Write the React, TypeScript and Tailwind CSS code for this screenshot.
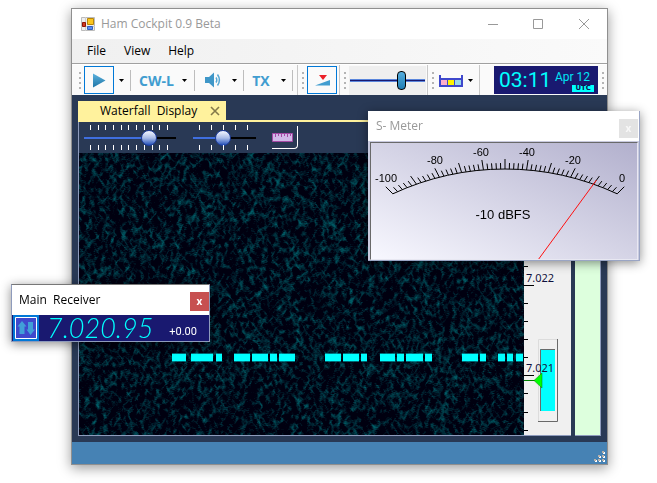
import React, { useEffect, useRef } from 'react';

const SIGNALS = [
  [93, 107], [112, 134], [137, 143], [155, 171], [173, 189], [191, 198], [200, 216],
  [246, 262], [264, 280], [282, 288], [301, 316], [318, 325], [327, 344], [346, 353],
  [383, 399], [401, 407], [419, 426], [428, 434], [437, 444],
];

function Waterfall() {
  const canvasRef = useRef<HTMLCanvasElement>(null);

  useEffect(() => {
    const canvas = canvasRef.current;
    if (!canvas) return;
    const w = (canvas.width = canvas.clientWidth);
    const h = (canvas.height = canvas.clientHeight);
    const ctx = canvas.getContext('2d');
    if (!ctx) return;

    let seed = 7021;
    const rand = () => {
      seed = (seed * 1664525 + 1013904223) % 4294967296;
      return seed / 4294967296;
    };

    const pad = 4;
    const nw = w + pad * 2;
    const raw = new Float32Array(nw * (h + pad * 2));
    for (let i = 0; i < raw.length; i++) raw[i] = rand() - 0.5;

    // two short smears, one leaning each way; the stronger one wins
    const smear = (x: number, y: number, lean: number) => {
      let sum = 0;
      for (let dy = -2; dy <= 2; dy++) {
        const row = (y + pad + dy) * nw + x + pad + Math.round((dy * lean) / 2);
        const weight = 1 - Math.abs(dy) * 0.22;
        sum += (raw[row] + raw[row - 1] * 0.6 + raw[row + 1] * 0.6) * weight;
      }
      return sum;
    };

    const img = ctx.createImageData(w, h);
    for (let y = 0; y < h; y++) {
      for (let x = 0; x < w; x++) {
        const v = Math.min(1, Math.max(0, Math.max(smear(x, y, 1), smear(x, y, -1)) * 0.45 + 0.04));
        const i = (y * w + x) * 4;
        img.data[i] = 0;
        img.data[i + 1] = v * 92;
        img.data[i + 2] = 16 + v * 86;
        img.data[i + 3] = 255;
      }
    }
    ctx.putImageData(img, 0, 0);

    SIGNALS.forEach(([from, to]) => {
      ctx.fillStyle = 'rgba(0,200,210,0.5)';
      ctx.fillRect(from, 200, to - from, 9);
      ctx.fillStyle = '#00ffff';
      ctx.fillRect(from, 201, to - from, 7);
    });
  }, []);

  return <canvas ref={canvasRef} className="block h-full w-full" />;
}

function Grip() {
  return (
    <div className="flex w-[9px] shrink-0 flex-col items-center gap-[3px]">
      {[0, 1, 2, 3].map((i) => (
        <span key={i} className="h-0.5 w-0.5 bg-[#b4b4b4]" />
      ))}
    </div>
  );
}

function Caret({ label, className = '' }: { label: string; className?: string }) {
  return (
    <button aria-label={label} className={`flex h-7 w-4 shrink-0 items-center justify-center ${className}`}>
      <svg width="5" height="3" viewBox="0 0 5 3">
        <path d="M0 0h5L2.500 3z" fill="#000" />
      </svg>
    </button>
  );
}

function Separator() {
  return <span className="h-[21px] w-px shrink-0 bg-[#bdbdbd]" />;
}

function Toolbar() {
  return (
    <div className="flex h-[31px] shrink-0 items-center border-t border-white bg-[#fafafa]">
      <div className="flex h-full shrink-0 items-center border-r border-[#c8c8c8] pl-[3px]">
        <Grip />
        <button aria-label="Start" className="flex h-7 w-[30px] items-center justify-center border border-[#0078d7]">
          <svg width="14" height="15" viewBox="0 0 14 15">
            <defs>
              <linearGradient id="play" x1="0" y1="0" x2="0" y2="1">
                <stop offset="0" stopColor="#5cb2de" />
                <stop offset="1" stopColor="#1d74a6" />
              </linearGradient>
            </defs>
            <path d="M1 0.500L13.500 7.500L1 14.500z" fill="url(#play)" />
          </svg>
        </button>
        <Caret label="Start options" className="pr-0.5" />
        <Separator />
        <button className="h-7 w-[47px] pl-1 font-['Open_Sans'] text-[14px] font-bold text-[#419dd0]">CW-L</button>
        <Caret label="Mode" className="pr-1" />
        <Separator />
        <button aria-label="Sound" className="flex h-7 w-8 items-center justify-center pl-1">
          <svg width="16" height="16" viewBox="0 0 16 16">
            <path d="M0 5h4l5-4.500v15L4 11H0z" fill="#3f97c8" />
            <path d="M11 5.500q1.600 2.500 0 5M12.500 2.500q3.800 5.500 0 11" fill="none" stroke="#56a8d4" strokeWidth="1.500" />
          </svg>
        </button>
        <Caret label="Sound options" className="pr-0.5" />
        <Separator />
        <button className="h-7 w-8 pl-0.5 font-['Open_Sans'] text-[14px] font-bold text-[#419dd0]">TX</button>
        <Caret label="Transmit options" className="pr-0.5" />
        <Separator />
        <span className="w-1" />
      </div>
      <div className="flex h-full shrink-0 items-center border-r border-[#c8c8c8]">
        <Grip />
        <button aria-label="Squelch" className="flex h-7 w-[30px] items-center justify-center border border-[#0078d7]">
          <svg width="15" height="11" viewBox="0 0 15 11">
            <path d="M4 0h8L8 5z" fill="#ec2028" />
            <path d="M0 10.500L15 5v5.500z" fill="#419dd0" />
          </svg>
        </button>
        <span className="w-0.5" />
      </div>
      <div className="flex h-full shrink-0 items-center border-r border-[#c8c8c8]">
        <Grip />
        <div className="mr-px flex h-[29px] w-[77px] items-center bg-[#efefef] px-px">
          <input
            type="range"
            aria-label="Volume"
            defaultValue={71}
            className="h-5 w-full appearance-none bg-transparent [&::-webkit-slider-runnable-track]:h-[3px] [&::-webkit-slider-runnable-track]:border-y [&::-webkit-slider-runnable-track]:border-[#5a86dc] [&::-webkit-slider-runnable-track]:bg-[#191970] [&::-webkit-slider-thumb]:-mt-[9px] [&::-webkit-slider-thumb]:h-[19px] [&::-webkit-slider-thumb]:w-[9px] [&::-webkit-slider-thumb]:appearance-none [&::-webkit-slider-thumb]:rounded-sm [&::-webkit-slider-thumb]:border [&::-webkit-slider-thumb]:border-black [&::-webkit-slider-thumb]:bg-[linear-gradient(#56aede,#1f7db3)]"
          />
        </div>
      </div>
      <div className="flex h-full shrink-0 items-center border-r border-[#c8c8c8]">
        <Grip />
        <button aria-label="Band" className="flex h-7 w-[26px] items-center justify-end pt-0.5">
          <svg width="24" height="13" viewBox="0 0 24 13">
            <path d="M0 0h2v3h20V0h2v12H0z" fill="#3f48cc" />
            <path d="M2 5h6v5H2z" fill="#ffaec9" />
            <path d="M9 5h6v5H9z" fill="#fff200" />
            <path d="M16 5h6v5h-6z" fill="#99d9ea" />
          </svg>
        </button>
        <Caret label="Band options" className="pr-0.5" />
      </div>
      <div className="ml-auto flex h-7 w-[104px] shrink-0 items-center justify-between bg-[#191970] pr-1 pl-[5px]">
        <time className="font-['Roboto'] text-[21px] leading-7 text-[#00ffff]">03:11</time>
        <div className="flex flex-col items-end">
          <span className="pr-1 font-['Roboto'] text-[12px] leading-4 text-[#00e5f5]">Apr 12</span>
          <span className="bg-[#00ffff] px-[3px] font-['DejaVu_Sans'] text-[7px] leading-[7px] font-bold text-[#101050]">UTC</span>
        </div>
      </div>
      <Grip />
    </div>
  );
}

const THUMB =
  'h-[15px] appearance-none bg-transparent [&::-webkit-slider-runnable-track]:h-0.5 [&::-webkit-slider-thumb]:-mt-[7px] [&::-webkit-slider-thumb]:size-4 [&::-webkit-slider-thumb]:appearance-none [&::-webkit-slider-thumb]:rounded-full [&::-webkit-slider-thumb]:border [&::-webkit-slider-thumb]:border-[#1d3c9c] [&::-webkit-slider-thumb]:bg-[linear-gradient(#f4f7ff,#a9bce8_50%,#2350b8)]';

function TickRow({ count }: { count: number }) {
  return (
    <div className="flex justify-between pr-2 pl-1.5">
      {Array.from({ length: count }, (_, i) => (
        <span key={i} className="h-[5px] w-px bg-white" />
      ))}
    </div>
  );
}

function ViewControls() {
  return (
    <div className="flex h-[31px] shrink-0 items-center pl-[5px]">
      <div className="flex w-[92px] flex-col">
        <TickRow count={11} />
        <input
          type="range"
          aria-label="Brightness"
          defaultValue={75}
          className={`w-full [&::-webkit-slider-runnable-track]:bg-[linear-gradient(to_right,#3f6fe0_70%,#000_70%)] ${THUMB}`}
        />
        <TickRow count={11} />
      </div>
      <div className="ml-[17px] flex w-[63px] flex-col">
        <TickRow count={5} />
        <input
          type="range"
          aria-label="Contrast"
          defaultValue={47}
          className={`w-full [&::-webkit-slider-runnable-track]:bg-[linear-gradient(to_right,#3f6fe0_48%,#000_48%)] ${THUMB}`}
        />
        <TickRow count={5} />
      </div>
      <button
        aria-label="Show scale"
        className="ml-4 flex h-[23px] w-[26px] items-center rounded-br border-r border-b border-white"
      >
        <svg width="21" height="9" viewBox="0 0 21 9">
          <path d="M0.500 0.500h20v8H0.500z" fill="#d0b8e8" stroke="#a349a4" />
          <path d="M3.500 1v3M6.500 1v2M9.500 1v3M12.500 1v2M15.500 1v3M18.500 1v2" stroke="#a349a4" />
        </svg>
      </button>
    </div>
  );
}

function FrequencyScale() {
  const ticks = [5, 23, 41, 59, 77, 95, 113, 150, 168, 186, 204, 240, 259, 277];
  return (
    <svg className="block h-full w-[47px] shrink-0 bg-[#f0f0f0]" viewBox="0 0 47 282" preserveAspectRatio="xMinYMin meet">
      {ticks.map((y) => (
        <path key={y} d={`M0 ${y + 0.5}h4`} stroke="#000" />
      ))}
      <path d="M0 132.500h10M0 222.500h10" stroke="#000" />
      <path d="M14.500 268V186.500H33" fill="none" stroke="#dcdcdc" />
      <path d="M14 268.500H33.500V186" fill="none" stroke="#696969" />
      <path d="M16 196h15v62H16z" fill="#00ffff" />
      <path d="M16.500 258V196.500H31" fill="none" stroke="#696969" />
      <path d="M0 227.500h11" stroke="#008000" />
      <path d="M10 227.500L18 220v15z" fill="#00ff00" stroke="#008000" strokeWidth="0.500" />
      <g fontFamily="'Noto Sans', sans-serif" fontSize="11" fill="#10103c">
        <text x="2" y="129">7.022</text>
        <text x="2" y="219">7.021</text>
      </g>
    </svg>
  );
}

function MainWindow() {
  return (
    <main className="flex min-h-0 flex-1 flex-col border border-[#8f8f8f] bg-white shadow-[0_3px_12px_rgba(0,0,0,0.4)]">
      <header className="flex h-[30px] shrink-0 items-center">
        <svg className="ml-[9px]" width="14" height="14" viewBox="0 0 14 14">
          <path d="M0.500 0.500h13v13H0.500z" fill="#eee" stroke="#bbb" />
          <path d="M4.500 0v14M0 9.500h14" stroke="#ccc" />
          <path d="M6.500 1.500h6v6h-6z" fill="#fbc51d" stroke="#b78509" />
          <path d="M1.500 5.500h3v4h-3z" fill="#d03a20" stroke="#8f1507" />
          <path d="M6.500 9.500h5v3h-5z" fill="#5a8cf0" stroke="#3460bc" />
        </svg>
        <h1 className="ml-1.5 text-[12px] text-[#999]">Ham Cockpit 0.9 Beta</h1>
        <div className="ml-auto flex">
          <button aria-label="Minimize" className="flex h-[29px] w-[45px] items-center justify-center">
            <svg width="10" height="10"><path d="M0 5.500h10" stroke="#999" /></svg>
          </button>
          <button aria-label="Maximize" className="flex h-[29px] w-[46px] items-center justify-center">
            <svg width="10" height="10"><path d="M0.500 0.500h9v9h-9z" fill="none" stroke="#999" /></svg>
          </button>
          <button aria-label="Close" className="flex h-[29px] w-[46px] items-center justify-center">
            <svg width="10" height="10"><path d="M0 0L10 10M10 0L0 10" stroke="#999" /></svg>
          </button>
        </div>
      </header>
      <nav className="flex h-[25px] shrink-0 items-center gap-1.5 border-b border-[#a0a0a0] bg-linear-to-r from-[#f0f0f0] to-[#fafafa] pl-[9px] text-[12px] text-black">
        <button className="px-1.5">File</button>
        <button className="px-1.5">View</button>
        <button className="px-1.5">Help</button>
      </nav>
      <Toolbar />
      <div className="flex min-h-0 flex-1 bg-[#293955] p-1.5">
        <section className="flex min-w-0 flex-1 flex-col">
          <div className="flex h-[19px] w-[148px] shrink-0 items-center justify-between bg-[#fff29d] pr-1.5 pl-[22px] text-[12px]">
            <span className="whitespace-pre text-black">Waterfall  Display</span>
            <button aria-label="Close tab">
              <svg className="block" width="10" height="10">
                <path d="M1 1L9 9M9 1L1 9" stroke="#84794a" strokeWidth="1.600" />
              </svg>
            </button>
          </div>
          <div className="h-0.5 shrink-0 bg-[#fff29d]" />
          <div className="flex min-h-0 flex-1 flex-col border-b border-l border-[#8e9bbc]">
            <ViewControls />
            <div className="flex min-h-0 flex-1">
              <div className="min-w-0 flex-1">
                <Waterfall />
              </div>
              <FrequencyScale />
            </div>
          </div>
        </section>
        <aside className="mt-5 ml-1 w-[26px] shrink-0 border-r border-b border-[#8e9bbc] bg-[#ddffdd]" />
      </div>
      <footer className="flex h-[22px] shrink-0 items-end justify-end bg-[#4682b4] p-px">
        <svg width="12" height="12" viewBox="0 0 12 12">
          {[[8, 0], [4, 4], [8, 4], [0, 8], [4, 8], [8, 8]].map(([x, y]) => (
            <g key={`${x}-${y}`}>
              <rect x={x + 1} y={y + 1} width="2" height="2" fill="#fff" />
              <rect x={x} y={y} width="2" height="2" fill="#b8b0a8" />
            </g>
          ))}
        </svg>
      </footer>
    </main>
  );
}

// pivot of the needle, and the dial circle that the rays from it meet
const PIVOT = { x: 134, y: 163 };
const DIAL_R = 266;
const DIAL_DROP = 129;

function dialPoint(db: number, offset = 0) {
  const a = ((db + 50) / 50) * (Math.PI / 4);
  const r = Math.sqrt(DIAL_R ** 2 - (DIAL_DROP * Math.sin(a)) ** 2) - DIAL_DROP * Math.cos(a) + offset;
  return { x: PIVOT.x + r * Math.sin(a), y: PIVOT.y - r * Math.cos(a) };
}

function SMeter() {
  const ticks = Array.from({ length: 51 }, (_, i) => -100 + i * 2);
  const start = dialPoint(-100);
  const end = dialPoint(0);
  const tip = dialPoint(-10, 5);
  const labels: [number, number, number][] = [
    [-100, 15, 39], [-80, 64, 21], [-60, 110, 13], [-40, 156, 13], [-20, 202, 21], [0, 251, 39],
  ];
  return (
    <section className="absolute top-[111px] left-[368px] w-[272px] border-r border-b border-[#9aa5c4] bg-white shadow-[0_2px_10px_rgba(0,0,0,0.45)]">
      <header className="flex h-[30px] items-center justify-between pr-px pl-2 text-[12px] text-[#999]">
        <h2>S- Meter</h2>
        <button aria-label="Close S-Meter" className="mt-1 size-[19px] bg-[#e3e3e3] text-[10px] leading-[17px] font-bold text-[#f8f8f8]">x</button>
      </header>
      <div className="bg-[#c9cadf] pt-px pr-px pl-0.5">
        <div className="border border-t-[#696969] border-r-[#e8e8f2] border-b-[#e8e8f2] border-l-[#696969] bg-[linear-gradient(to_top_right,#f8f8ff,#b2b0cd)]">
          <svg className="block w-full" viewBox="0 0 266 116">
            <path d={`M${start.x} ${start.y}A${DIAL_R} ${DIAL_R} 0 0 1 ${end.x} ${end.y}`} fill="none" stroke="#000" />
            {ticks.map((db) => {
              const p = dialPoint(db);
              const q = dialPoint(db, db % 10 === 0 ? 10 : 6);
              return <path key={db} d={`M${p.x} ${p.y}L${q.x} ${q.y}`} stroke="#000" />;
            })}
            <path d={`M167 117L${tip.x} ${tip.y}`} stroke="#ff1010" />
            <g fontFamily="'Liberation Sans', Arial, sans-serif" fontSize="11" textAnchor="middle">
              {labels.map(([db, x, y]) => (
                <text key={db} x={x} y={y}>{db}</text>
              ))}
              <text x="132" y="76" fontSize="13">-10 dBFS</text>
            </g>
          </svg>
        </div>
      </div>
    </section>
  );
}

function MainReceiver() {
  return (
    <section className="absolute top-[284px] left-[11px] w-[199px] border border-t-[#777] border-r-[#8e9bbc] border-b-[#8e9bbc] border-l-[#8e9bbc] bg-white shadow-[0_2px_10px_rgba(0,0,0,0.45)]">
      <header className="flex h-[30px] items-center justify-between pl-[7px] text-[12px] text-black">
        <h2 className="whitespace-pre">Main  Receiver</h2>
        <button aria-label="Close Main Receiver" className="mt-0.5 size-[19px] bg-[#c75050] text-[10px] leading-[17px] font-bold text-white">x</button>
      </header>
      <div className="flex h-[26px] items-center bg-[#191970]">
        <button aria-label="Split" className="ml-px size-[26px] bg-[#0078d7] p-0.5">
          <svg className="block" width="22" height="22" viewBox="0 0 22 22">
            <path d="M0.500 0.500h21v21H0.500z" fill="#3f48cc" stroke="#fff" />
            <path d="M7 4L11.500 9.500H9.500V17H4.500V9.500H2.500z" fill="#419fd8" />
            <path d="M15.500 18L11.500 12.500H13V5h5v7.500h2z" fill="#419fd8" />
          </svg>
        </button>
        <output className="ml-2 font-['Lato'] text-[27px] leading-[26px] font-light text-[#00ffff] italic">7.020.95</output>
        <span className="mt-2 mr-3 ml-auto font-['Roboto'] text-[11px] leading-4 text-white">+0.00</span>
      </div>
    </section>
  );
}

export default function App() {
  return (
    <div className="relative flex h-screen flex-col overflow-hidden bg-white pt-2 pr-[49px] pb-[18px] pl-[71px] font-['Open_Sans',sans-serif]">
      <MainWindow />
      <MainReceiver />
      <SMeter />
    </div>
  );
}
